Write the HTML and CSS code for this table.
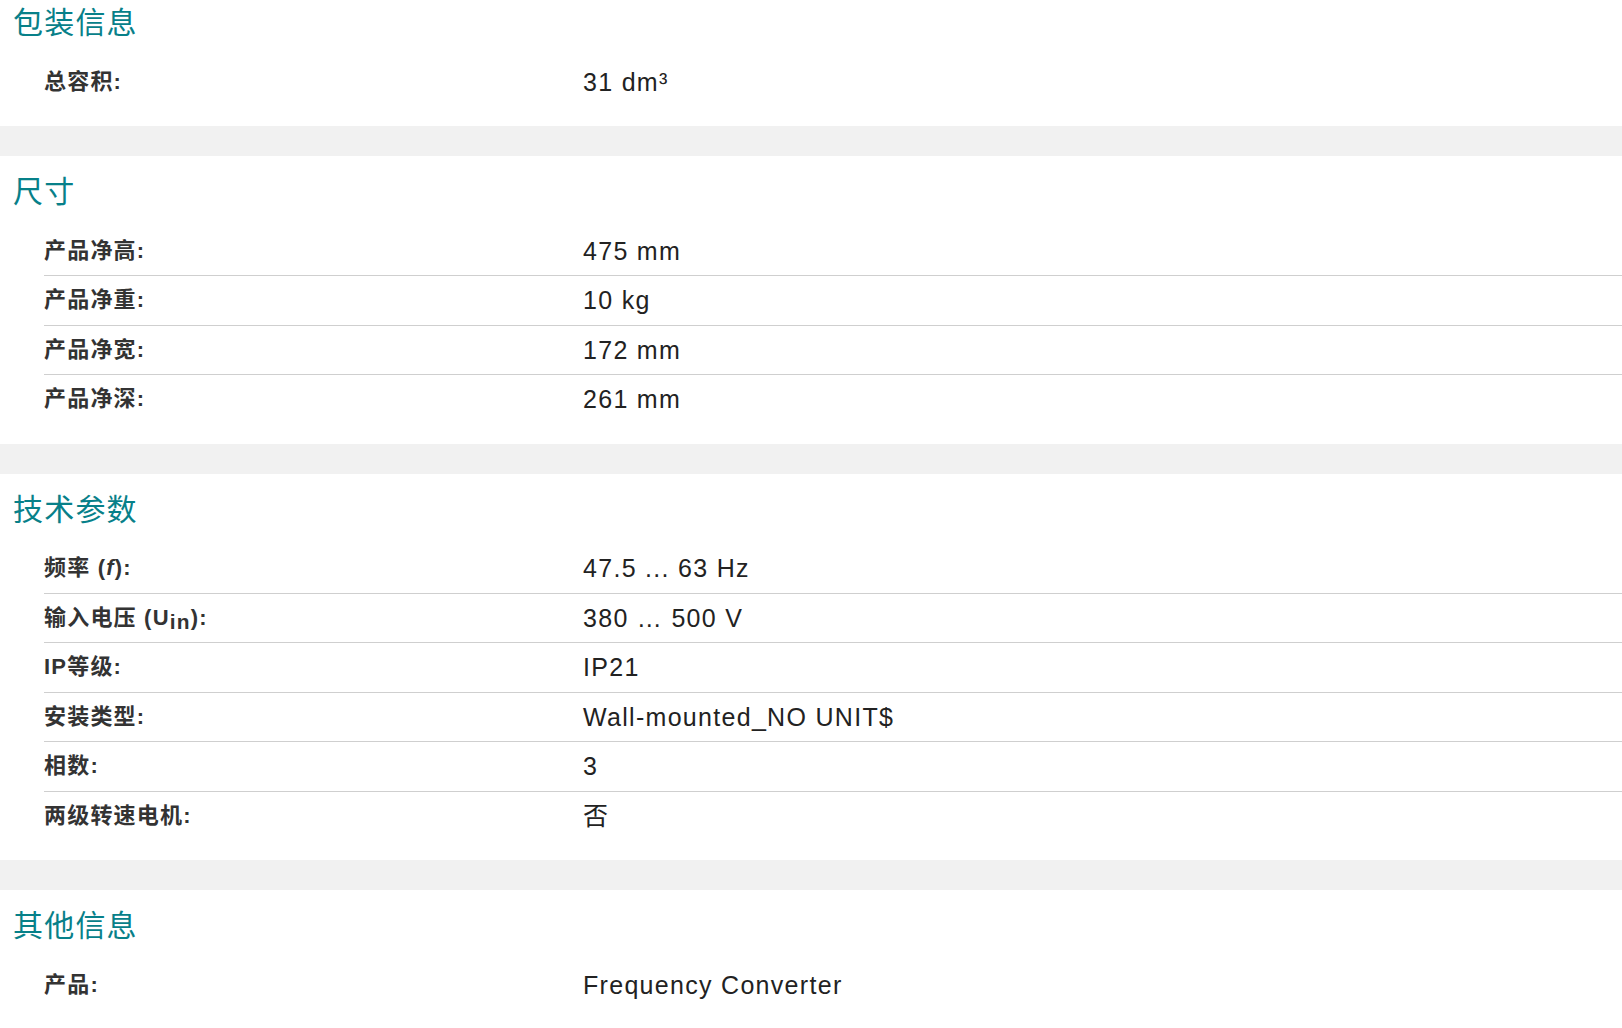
FILE: index.html
```html
<!DOCTYPE html>
<html lang="zh-CN">
<head>
<meta charset="utf-8">
<title>产品参数</title>
<link rel="stylesheet" href="styles.css">
</head>
<body>
<div class="page">
  <section class="section">
    <h2 class="heading">包装信息</h2>
    <div class="rows">
      <div class="row"><div class="label">总容积:</div><div class="value">31 dm³</div></div>
    </div>
  </section>
  <div class="band"></div>
  <section class="section">
    <h2 class="heading">尺寸</h2>
    <div class="rows">
      <div class="row"><div class="label">产品净高:</div><div class="value">475 mm</div></div>
      <div class="row"><div class="label">产品净重:</div><div class="value">10 kg</div></div>
      <div class="row"><div class="label">产品净宽:</div><div class="value">172 mm</div></div>
      <div class="row"><div class="label">产品净深:</div><div class="value">261 mm</div></div>
    </div>
  </section>
  <div class="band"></div>
  <section class="section">
    <h2 class="heading">技术参数</h2>
    <div class="rows">
      <div class="row"><div class="label">频率 (<i class="it">f</i>):</div><div class="value">47.5 ... 63 Hz</div></div>
      <div class="row"><div class="label">输入电压 (U<sub class="sub">in</sub>):</div><div class="value">380 … 500 V</div></div>
      <div class="row"><div class="label">IP等级:</div><div class="value">IP21</div></div>
      <div class="row"><div class="label">安装类型:</div><div class="value">Wall-mounted_NO UNIT$</div></div>
      <div class="row"><div class="label">相数:</div><div class="value">3</div></div>
      <div class="row"><div class="label">两级转速电机:</div><div class="value">否</div></div>
    </div>
  </section>
  <div class="band"></div>
  <section class="section">
    <h2 class="heading">其他信息</h2>
    <div class="rows">
      <div class="row"><div class="label">产品:</div><div class="value">Frequency Converter</div></div>
    </div>
  </section>
</div>
</body>
</html>
```

FILE: styles.css
```css
html, body {
  margin: 0;
  padding: 0;
  background: #ffffff;
}
body {
  font-family: "Liberation Sans", "Noto Sans CJK SC", sans-serif;
  overflow: hidden;
}
.page {
  margin-top: -13px;
}
.section {
  padding: 18px 0 19px 0;
  background: #ffffff;
}
.band {
  height: 30px;
  background: #f1f1f1;
}
.heading {
  margin: 0;
  padding-left: 13px;
  font-size: 30px;
  line-height: 36px;
  font-weight: normal;
  letter-spacing: 1.2px;
  color: #078089;
}
.rows {
  margin-top: 16.5px;
  padding-left: 44px;
}
.row {
  box-sizing: border-box;
  height: 49.5px;
  display: grid;
  grid-template-columns: 539px 1fr;
  align-items: center;
  border-bottom: 1.5px solid #cfcfcf;
}
.row:last-child {
  border-bottom-color: transparent;
}
.label {
  font-size: 22px;
  font-weight: bold;
  letter-spacing: 1.2px;
  color: #333333;
  line-height: 30px;
}
.value {
  font-size: 25px;
  letter-spacing: 1.3px;
  color: #222222;
  line-height: 30px;
}
.it {
  font-style: italic;
}
.sub {
  font-size: 0.95em;
  vertical-align: -4px;
  line-height: 0;
}
```
